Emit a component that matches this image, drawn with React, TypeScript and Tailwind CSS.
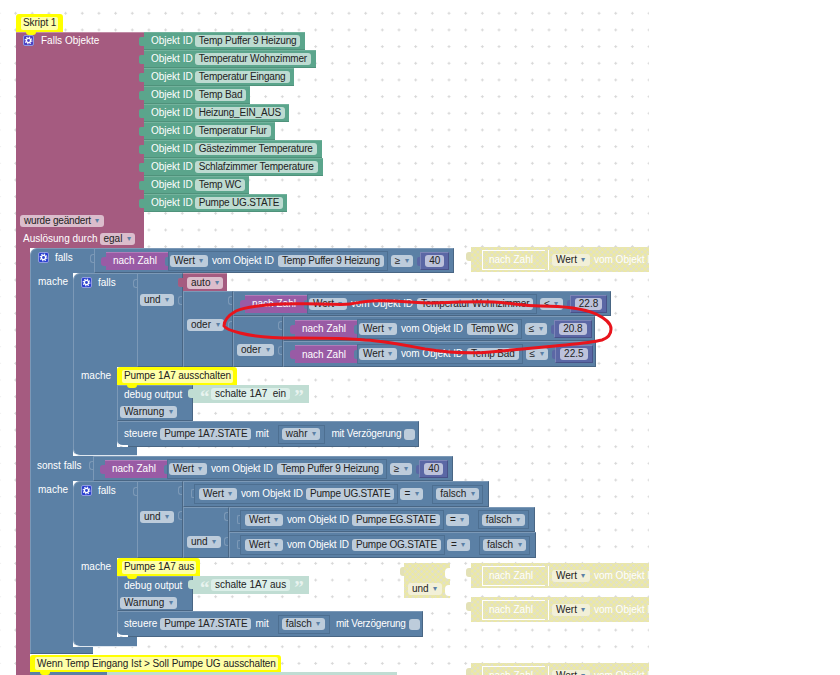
import React from 'react';

const BLUE =
  'bg-[#5b80a5] border border-t-[#7c99b7] border-l-[#7c99b7] border-b-[#496684] border-r-[#496684]';
const HATCH =
  'bg-[#e0e0cc] bg-[repeating-linear-gradient(45deg,#eeea9c99_0_2px,transparent_2px_4px),repeating-linear-gradient(-45deg,#eeea9c99_0_2px,transparent_2px_4px)]';
const NAME = 'tracking-[-0.18px]';

const GREEN_ROWS = [
  { name: 'Temp Puffer 9 Heizung', width: 'w-[161px]' },
  { name: 'Temperatur Wohnzimmer', width: 'w-[172px]' },
  { name: 'Temperatur Eingang', width: 'w-[150px]' },
  { name: 'Temp Bad', width: 'w-[106px]' },
  { name: 'Heizung_EIN_AUS', width: 'w-[145px]' },
  { name: 'Temperatur Flur', width: 'w-[131px]' },
  { name: 'Gästezimmer Temperature', width: 'w-[178px]' },
  { name: 'Schlafzimmer Temperature', width: 'w-[179px]' },
  { name: 'Temp WC', width: 'w-[105px]' },
  { name: 'Pumpe UG.STATE', width: 'w-[143px]' },
];

// loose blocks parked on the workspace
const DISABLED_ROWS = ['top-[247px]', 'top-[563px]', 'top-[597px]', 'top-[663px]'];

type Tone = 'blue' | 'pink' | 'green' | 'num' | 'pale' | 'plain';

function Field({ children, arrow, tone = 'blue', className = '' }: { children: React.ReactNode; arrow?: boolean; tone?: Tone; className?: string }) {
  const bg = {
    blue: 'bg-[#bdccdb]',
    pink: 'bg-[#dbbdcc]',
    green: 'bg-[#bddbd1]',
    num: 'bg-[#bdc2db]',
    pale: 'bg-[#dcefe9]',
    plain: 'bg-[#f2f0d8]',
  }[tone];
  return (
    <span className={`flex h-[12px] w-fit shrink-0 items-center rounded-[3px] pl-[4px] text-[#222] ${arrow ? '' : 'pr-[4px]'} ${bg} ${className}`}>
      {children}
      {arrow && <span className="w-[13px] text-center text-[8px] tracking-normal text-[#5b80a5]">▾</span>}
    </span>
  );
}

function Gear({ className = '' }: { className?: string }) {
  return (
    <span className={`flex h-[11px] w-[11px] shrink-0 items-center justify-center rounded-[2px] border border-[#8f9be0] ${className}`}>
      <svg viewBox="0 0 10 10" className="h-[9px] w-[9px]" fill="none" stroke="#fff">
        <circle cx="5" cy="5" r="2.3" strokeWidth="1.4" />
        <circle cx="5" cy="5" r="3.7" strokeWidth="1.3" strokeDasharray="1.45 1.45" />
      </svg>
    </span>
  );
}

function Slot({ className }: { className: string }) {
  return <span className={`absolute right-0 h-[9px] w-[4px] rounded-l-[3px] border-y border-l border-[#7c99b7] ${className}`} />;
}

function NachZahl() {
  return (
    <div className="relative flex h-[18px] w-[62px] shrink-0 items-center border-t border-t-[#b07cb9] bg-[#995ba5] pl-[7px] text-white">
      <span className="absolute -left-[5px] top-[4px] h-[9px] w-[5px] rounded-l-[3px] bg-[#995ba5]" />
      nach Zahl
      <span className="absolute right-0 top-[4px] h-[9px] w-[3px] rounded-l-[2px] bg-[#5b80a5]" />
    </div>
  );
}

function NumBlock({ value }: { value: string }) {
  return (
    <div className="relative ml-[7px] flex h-[18px] shrink-0 items-center border border-t-[#7c85b7] border-l-[#7c85b7] border-b-[#495289] border-r-[#495289] bg-[#5b67a5] px-[4px]">
      <span className="absolute -left-[4px] top-[4px] h-[9px] w-[3px] rounded-l-[2px] bg-[#5b67a5]" />
      <Field tone="num">{value}</Field>
    </div>
  );
}

function Compare({ name, op, value, className }: { name: string; op: string; value: string; className: string }) {
  return (
    <div className={`flex shrink-0 items-center pl-[11px] ${BLUE} ${className}`}>
      <NachZahl />
      <div className="flex h-[20px] shrink-0 items-center border border-[#4d6f91] pl-[1px] pr-[3px]">
        <Field arrow>Wert</Field>
        <span className="ml-[4px] tracking-[-0.1px] text-white">vom Objekt ID</span>
        <Field className={`ml-[4px] ${NAME}`}>{name}</Field>
      </div>
      <Field arrow className="ml-[3px]">{op}</Field>
      <NumBlock value={value} />
    </div>
  );
}

function FalseCompare({ name, className }: { name: string; className: string }) {
  return (
    <div className={`flex shrink-0 items-center pl-[10px] ${BLUE} ${className}`}>
      <div className="relative flex h-[20px] shrink-0 items-center border border-[#4d6f91] pl-[4px] pr-[3px]">
        <span className="absolute -left-[4px] top-[4px] h-[9px] w-[3px] rounded-l-[2px] border-y border-l border-[#7c99b7]" />
        <Field arrow>Wert</Field>
        <span className="ml-[4px] tracking-[-0.1px] text-white">vom Objekt ID</span>
        <Field className={`ml-[3px] ${NAME}`}>{name}</Field>
      </div>
      <Field arrow className="ml-[2px]">=</Field>
      <div className="ml-[9px] flex h-[19px] shrink-0 items-center border border-[#4d6f91] px-[3px]">
        <Field arrow>falsch</Field>
      </div>
    </div>
  );
}

function Comment({ children, className }: { children: React.ReactNode; className: string }) {
  return (
    <div className={`relative z-10 flex shrink-0 items-center rounded-t-[3px] border-2 border-[#ffff00] bg-[#ffff00] pl-[3px] ${className}`}>
      <span className="flex h-[13px] items-center rounded-[2px] bg-[#ffffa8] px-[2px] tracking-[-0.07px] text-[#222]">{children}</span>
      <span className="absolute -bottom-[5px] left-[8px] h-[3px] w-[10px] rounded-b-[3px] bg-[#ffff00]" />
    </div>
  );
}

function DebugOutput({ text, className }: { text: string; className: string }) {
  return (
    <div className="flex items-start">
      <div className={`flex w-[76px] flex-col items-start gap-[6px] pl-[2px] pt-[4px] ${BLUE} ${className}`}>
        <span className="ml-[4px] text-white">debug output</span>
        <Field arrow>Warnung</Field>
      </div>
      <div className="relative flex h-[18px] w-[116px] items-center bg-[#c0ddd3] pl-[7px]">
        <span className="absolute -left-[5px] top-[4px] h-[9px] w-[5px] rounded-l-[3px] bg-[#c0ddd3]" />
        <span className="h-[12px] w-[11px] font-['Liberation_Serif',serif] text-[19px] font-bold leading-[17px] text-[#e8f3ef]">“</span>
        <Field tone="pale">{text}</Field>
        <span className="ml-[4px] h-[12px] font-['Liberation_Serif',serif] text-[19px] font-bold leading-[17px] text-[#e8f3ef]">”</span>
      </div>
    </div>
  );
}

function Steuere({ state, className }: { state: string; className: string }) {
  return (
    <div className={`relative flex h-[26px] items-center rounded-bl-[6px] pl-[6px] ${BLUE} ${className}`}>
      <span className="text-white">steuere</span>
      <Field className={`ml-[3px] ${NAME}`}>Pumpe 1A7.STATE</Field>
      <span className="ml-[4px] text-white">mit</span>
      <div className="ml-[9px] flex h-[19px] shrink-0 items-center border border-[#4d6f91] pl-[3px] pr-[4px]">
        <Field arrow>{state}</Field>
      </div>
      <span className="ml-[6px] tracking-[-0.2px] text-white">mit Verzögerung</span>
      <span className="ml-[3px] h-[11px] w-[11px] shrink-0 rounded-[3px] bg-[#bdccdb]" />
      <span className="absolute -bottom-px -left-px h-[7px] w-[11px] rounded-bl-[6px] border-b-2 border-white" />
    </div>
  );
}

function FallsCell({ className }: { className: string }) {
  return (
    <div className={`relative flex w-[64px] items-start gap-[6px] rounded-tl-[7px] border-l border-t border-[#7c99b7] bg-[#5b80a5] pl-[7px] pt-[3px] text-white ${className}`}>
      <Gear className="bg-[#2a40d0]" />
      <span className="mt-[1px]">falls</span>
      <Slot className="top-[5px]" />
    </div>
  );
}

function MacheCell({ className }: { className: string }) {
  return <div className={`shrink-0 bg-[#5b80a5] pl-[7px] pt-[4px] text-white ${className}`}>mache</div>;
}

function CapCell({ className }: { className: string }) {
  return <div className={`w-[64px] rounded-bl-[7px] border-b border-l border-b-[#dfe7ef] border-l-[#7c99b7] bg-[#5b80a5] ${className}`} />;
}

export default function App() {
  return (
    <div className="relative h-[675px] w-[840px] overflow-hidden whitespace-pre bg-white font-['Liberation_Sans',Arial,sans-serif] text-[10px] leading-none">
      {/* dotted workspace grid */}
      <svg className="absolute left-0 top-0 h-[675px] w-[649px]">
        <defs>
          <pattern id="grid" x="14.1" y="11.8" width="16.67" height="16.67" patternUnits="userSpaceOnUse">
            <path d="M0 1.5H3M1.5 0V3" stroke="#d8d8d8" strokeWidth="1" />
          </pattern>
        </defs>
        <rect width="649" height="675" fill="url(#grid)" />
      </svg>

      {/* Skript 1 stack */}
      <div className="absolute left-[16px] top-[14px] flex flex-col">
        <Comment className="h-[18px] w-[47px]">Skript 1</Comment>

        {/* trigger block */}
        <div className="flex">
          <div className="flex h-[216px] w-[128px] shrink-0 flex-col border-t border-t-[#c08aa5] bg-[#a55b80] pb-[3px] text-white">
            <div className="flex items-center gap-[7px] pl-[7px] pt-[2px]">
              <Gear className="bg-[#4a3fc4]" />
              Falls Objekte
            </div>
            <Field arrow tone="pink" className={`ml-[4px] mt-auto ${NAME}`}>wurde geändert</Field>
            <div className="mt-[6px] flex items-center pl-[7px]">
              Auslösung durch
              <Field arrow tone="pink" className="ml-[2px]">egal</Field>
            </div>
          </div>
          <div className="flex flex-col">
            {GREEN_ROWS.map((row) => (
              <div
                key={row.name}
                className={`relative flex h-[18px] items-center border-y border-t-[#72b29c] border-b-[#4f927b] bg-[#5ba58c] pl-[7px] ${row.width}`}
              >
                <span className="absolute -left-[5px] top-[4px] h-[9px] w-[5px] rounded-l-[2px] bg-[#5ba58c]" />
                <span className="text-white">Objekt ID</span>
                <Field tone="green" className={`ml-[2px] ${NAME}`}>{row.name}</Field>
              </div>
            ))}
          </div>
        </div>

        <div className="flex">
          <div className="h-[427px] w-[14px] shrink-0 bg-[#a55b80]" />
          <div className="flex flex-col">
            {/* outer if */}
            <div className="flex">
              <FallsCell className="h-[25px] w-[63px]" />
              <Compare name="Temp Puffer 9 Heizung" op="≥" value="40" className="h-[25px] w-[360px]" />
            </div>
            <div className="flex">
              <MacheCell className="h-[183px] w-[43px] border-l border-l-[#7c99b7]" />

              {/* first inner if */}
              <div className="flex flex-col">
                <div className="flex">
                  <FallsCell className="h-[94px]" />
                  <div className={`relative h-[94px] w-[46px] shrink-0 pl-[2px] pt-[20px] ${BLUE}`}>
                    <Field arrow>und</Field>
                    <Slot className="top-[4px]" />
                    <Slot className="top-[22px]" />
                  </div>
                  <div className="flex flex-col">
                    <div className="relative flex h-[18px] w-[44px] items-center border-t border-t-[#c08aa5] bg-[#a55b80] pl-[4px]">
                      <span className="absolute -left-[5px] top-[4px] h-[9px] w-[5px] rounded-l-[2px] bg-[#a55b80]" />
                      <Field arrow tone="pink">auto</Field>
                    </div>
                    <div className="flex">
                      <div className={`relative h-[76px] w-[50px] shrink-0 pl-[3px] pt-[27px] ${BLUE}`}>
                        <Field arrow>oder</Field>
                        <Slot className="top-[4px]" />
                        <Slot className="top-[29px]" />
                      </div>
                      <div className="flex flex-col">
                        <Compare name="Temperatur Wohnzimmer" op="≤" value="22.8" className="h-[25px] w-[378px]" />
                        <div className="flex">
                          <div className={`relative h-[51px] w-[50px] shrink-0 pl-[3px] pt-[27px] ${BLUE}`}>
                            <Field arrow>oder</Field>
                            <Slot className="top-[4px]" />
                            <Slot className="top-[29px]" />
                          </div>
                          <div className="flex flex-col">
                            <Compare name="Temp WC" op="≤" value="20.8" className="h-[25px] w-[312px]" />
                            <Compare name="Temp Bad" op="≤" value="22.5" className="h-[26px] w-[313px]" />
                          </div>
                        </div>
                      </div>
                    </div>
                  </div>
                </div>
                <div className="flex">
                  <MacheCell className="h-[80px] w-[44px] border-l border-l-[#7c99b7]" />
                  <div className="flex flex-col">
                    <Comment className="h-[18px] w-[120px]">Pumpe 1A7 ausschalten</Comment>
                    <DebugOutput text="schalte 1A7  ein" className="h-[36px]" />
                    <Steuere state="wahr" className="w-[302px]" />
                  </div>
                </div>
                <CapCell className="h-[9px]" />
              </div>
            </div>

            <div className="flex">
              <div className="relative h-[25px] w-[63px] shrink-0 border-l border-l-[#7c99b7] bg-[#5b80a5] pl-[6px] pt-[5px] text-white">
                sonst falls
                <Slot className="top-[5px]" />
              </div>
              <Compare name="Temp Puffer 9 Heizung" op="≥" value="40" className="h-[25px] w-[360px]" />
            </div>
            <div className="flex">
              <MacheCell className="h-[166px] w-[43px] border-l border-l-[#7c99b7]" />

              {/* second inner if */}
              <div className="flex flex-col">
                <div className="flex">
                  <FallsCell className="h-[77px]" />
                  <div className={`relative h-[77px] w-[46px] shrink-0 pl-[2px] pt-[29px] ${BLUE}`}>
                    <Field arrow>und</Field>
                    <Slot className="top-[4px]" />
                    <Slot className="top-[29px]" />
                  </div>
                  <div className="flex flex-col">
                    <FalseCompare name="Pumpe UG.STATE" className="h-[26px] w-[306px]" />
                    <div className="flex">
                      <div className={`relative h-[51px] w-[46px] shrink-0 pl-[3px] pt-[28px] ${BLUE}`}>
                        <Field arrow>und</Field>
                        <Slot className="top-[4px]" />
                        <Slot className="top-[29px]" />
                      </div>
                      <div className="flex flex-col">
                        <FalseCompare name="Pumpe EG.STATE" className="h-[25px] w-[306px]" />
                        <FalseCompare name="Pumpe OG.STATE" className="h-[26px] w-[307px]" />
                      </div>
                    </div>
                  </div>
                </div>
                <div className="flex">
                  <MacheCell className="h-[79px] w-[44px] border-l border-l-[#7c99b7]" />
                  <div className="flex flex-col">
                    <Comment className="h-[18px] w-[83px]">Pumpe 1A7 aus</Comment>
                    <DebugOutput text="schalte 1A7 aus" className="h-[35px]" />
                    <Steuere state="falsch" className="w-[306px]" />
                  </div>
                </div>
                <CapCell className="h-[10px]" />
              </div>
            </div>
            <div className="h-[7px] w-[63px] border-b border-l border-b-[#496684] border-l-[#7c99b7] bg-[#5b80a5]" />

            <Comment className="mt-px h-[17px] w-[251px]">Wenn Temp Eingang Ist &gt; Soll Pumpe UG ausschalten</Comment>
            <div className="flex h-[3px]">
              <div className="w-[77px] bg-[#5b80a5]" />
              <div className="w-[290px] bg-[#c0ddd3]" />
            </div>
          </div>
        </div>
      </div>

      {/* disabled blocks */}
      {DISABLED_ROWS.map((pos) => (
        <div key={pos} className={`absolute left-[466px] flex h-[25px] w-[183px] overflow-hidden ${pos}`}>
          <span className="mt-[5px] h-[9px] w-[5px] shrink-0 rounded-l-[3px] bg-[#e3e1b6]" />
          <div className={`flex h-[25px] w-[178px] shrink-0 items-center pl-[11px] ${HATCH}`}>
            <div className="flex h-[20px] w-[63px] shrink-0 items-center border border-r-0 border-white pl-[6px] text-white">nach Zahl</div>
            <div className="ml-[3px] flex h-[20px] shrink-0 items-center border-l border-white pl-[3px]">
              <Field arrow tone="plain">Wert</Field>
              <span className="ml-[4px] text-white">vom Objekt ID</span>
            </div>
          </div>
        </div>
      ))}
      <div className={`absolute left-[404px] top-[563px] flex h-[35px] w-[46px] flex-col justify-end pb-[3px] pl-[4px] ${HATCH}`}>
        <span className="absolute -left-[4px] top-[4px] h-[9px] w-[4px] rounded-l-[3px] bg-[#e3e1b6]" />
        <span className="absolute right-0 top-[5px] h-[11px] w-[5px] rounded-l-[4px] bg-white" />
        <span className="absolute right-0 top-[22px] h-[11px] w-[5px] rounded-l-[4px] bg-white" />
        <Field arrow tone="plain">und</Field>
      </div>

      {/* hand drawn marking */}
      <svg className="absolute left-0 top-0 z-20 h-[675px] w-[649px]" fill="none">
        <path
          d="M224 326C224 320 229 315 236 311C245 307 256 306 267 305C285 303 300 304 320 304C332 304 342 305 350 304C358 303 364 301 372 301C395 300 415 303 433 303C455 302 478 301 493 302C512 303 522 306 540 306C558 306 580 307 596 314C606 319 611 323 611 329C611 335 608 338 602 340C590 343 575 344 555 346C535 348 510 350 490 352C470 354 445 352 425 349C405 345 385 341 365 340C345 338 320 338 295 338C275 338 255 337 240 333C232 331 226 329 224 326Z"
          stroke="#e8141c"
          strokeWidth="3"
          strokeLinejoin="round"
        />
      </svg>
    </div>
  );
}
